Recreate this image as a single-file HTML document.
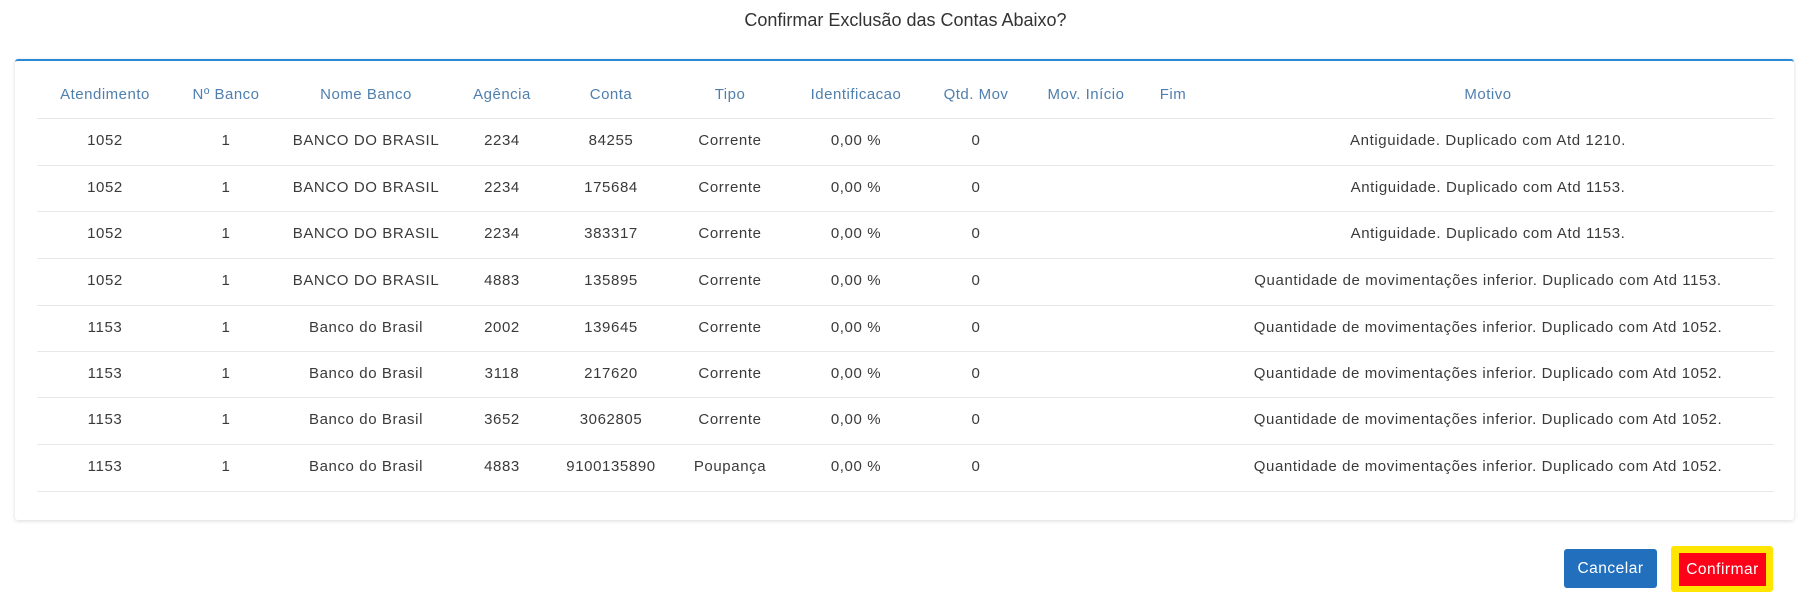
<!DOCTYPE html>
<html><head><meta charset="utf-8"><style>
body{margin:0;width:1811px;height:616px;background:#fff;font-family:"Liberation Sans",sans-serif;position:relative;overflow:hidden}
.t{position:absolute;top:9px;left:0;width:1811px;text-align:center;font-size:18px;color:#333;line-height:22px}
.card{position:absolute;left:15px;top:59px;width:1779px;height:461px;border-top:2px solid #2b8ad6;border-radius:3px;box-shadow:0 1px 4px rgba(0,0,0,.15);background:#fff;box-sizing:border-box}
.c{position:absolute;transform:translateX(-50%);white-space:nowrap;font-size:15px;letter-spacing:0.6px;line-height:18px;color:#3a3a3a}
.h{color:#4f7fae;letter-spacing:0.5px}
.l{position:absolute;left:37px;width:1737px;height:1px;background:#e8e8e8}
.btn{position:absolute;color:#fff;font-size:15.5px;letter-spacing:0.5px;text-align:center}
</style></head><body>
<div class="t">Confirmar Exclusão das Contas Abaixo?</div>
<div class="card"></div>
<div class="l" style="top:118px"></div>
<div class="l" style="top:165px"></div>
<div class="l" style="top:211px"></div>
<div class="l" style="top:258px"></div>
<div class="l" style="top:305px"></div>
<div class="l" style="top:351px"></div>
<div class="l" style="top:397px"></div>
<div class="l" style="top:444px"></div>
<div class="l" style="top:491px"></div>

<div class="c h" style="left:105px;top:86px">Atendimento</div>
<div class="c h" style="left:226px;top:86px">Nº Banco</div>
<div class="c h" style="left:366px;top:86px">Nome Banco</div>
<div class="c h" style="left:502px;top:86px">Agência</div>
<div class="c h" style="left:611px;top:86px">Conta</div>
<div class="c h" style="left:730px;top:86px">Tipo</div>
<div class="c h" style="left:856px;top:86px">Identificacao</div>
<div class="c h" style="left:976px;top:86px">Qtd. Mov</div>
<div class="c h" style="left:1086px;top:86px">Mov. Início</div>
<div class="c h" style="left:1173px;top:86px">Fim</div>
<div class="c h" style="left:1488px;top:86px">Motivo</div>

<div class="c" style="left:105px;top:132px">1052</div><div class="c" style="left:226px;top:132px">1</div><div class="c" style="left:366px;top:132px">BANCO DO BRASIL</div><div class="c" style="left:502px;top:132px">2234</div><div class="c" style="left:611px;top:132px">84255</div><div class="c" style="left:730px;top:132px">Corrente</div><div class="c" style="left:856px;top:132px">0,00 %</div><div class="c" style="left:976px;top:132px">0</div><div class="c" style="left:1488px;top:132px">Antiguidade. Duplicado com Atd 1210.</div>

<div class="c" style="left:105px;top:179px">1052</div><div class="c" style="left:226px;top:179px">1</div><div class="c" style="left:366px;top:179px">BANCO DO BRASIL</div><div class="c" style="left:502px;top:179px">2234</div><div class="c" style="left:611px;top:179px">175684</div><div class="c" style="left:730px;top:179px">Corrente</div><div class="c" style="left:856px;top:179px">0,00 %</div><div class="c" style="left:976px;top:179px">0</div><div class="c" style="left:1488px;top:179px">Antiguidade. Duplicado com Atd 1153.</div>

<div class="c" style="left:105px;top:225px">1052</div><div class="c" style="left:226px;top:225px">1</div><div class="c" style="left:366px;top:225px">BANCO DO BRASIL</div><div class="c" style="left:502px;top:225px">2234</div><div class="c" style="left:611px;top:225px">383317</div><div class="c" style="left:730px;top:225px">Corrente</div><div class="c" style="left:856px;top:225px">0,00 %</div><div class="c" style="left:976px;top:225px">0</div><div class="c" style="left:1488px;top:225px">Antiguidade. Duplicado com Atd 1153.</div>

<div class="c" style="left:105px;top:272px">1052</div><div class="c" style="left:226px;top:272px">1</div><div class="c" style="left:366px;top:272px">BANCO DO BRASIL</div><div class="c" style="left:502px;top:272px">4883</div><div class="c" style="left:611px;top:272px">135895</div><div class="c" style="left:730px;top:272px">Corrente</div><div class="c" style="left:856px;top:272px">0,00 %</div><div class="c" style="left:976px;top:272px">0</div><div class="c" style="left:1488px;top:272px">Quantidade de movimentações inferior. Duplicado com Atd 1153.</div>

<div class="c" style="left:105px;top:319px">1153</div><div class="c" style="left:226px;top:319px">1</div><div class="c" style="left:366px;top:319px">Banco do Brasil</div><div class="c" style="left:502px;top:319px">2002</div><div class="c" style="left:611px;top:319px">139645</div><div class="c" style="left:730px;top:319px">Corrente</div><div class="c" style="left:856px;top:319px">0,00 %</div><div class="c" style="left:976px;top:319px">0</div><div class="c" style="left:1488px;top:319px">Quantidade de movimentações inferior. Duplicado com Atd 1052.</div>

<div class="c" style="left:105px;top:365px">1153</div><div class="c" style="left:226px;top:365px">1</div><div class="c" style="left:366px;top:365px">Banco do Brasil</div><div class="c" style="left:502px;top:365px">3118</div><div class="c" style="left:611px;top:365px">217620</div><div class="c" style="left:730px;top:365px">Corrente</div><div class="c" style="left:856px;top:365px">0,00 %</div><div class="c" style="left:976px;top:365px">0</div><div class="c" style="left:1488px;top:365px">Quantidade de movimentações inferior. Duplicado com Atd 1052.</div>

<div class="c" style="left:105px;top:411px">1153</div><div class="c" style="left:226px;top:411px">1</div><div class="c" style="left:366px;top:411px">Banco do Brasil</div><div class="c" style="left:502px;top:411px">3652</div><div class="c" style="left:611px;top:411px">3062805</div><div class="c" style="left:730px;top:411px">Corrente</div><div class="c" style="left:856px;top:411px">0,00 %</div><div class="c" style="left:976px;top:411px">0</div><div class="c" style="left:1488px;top:411px">Quantidade de movimentações inferior. Duplicado com Atd 1052.</div>

<div class="c" style="left:105px;top:458px">1153</div><div class="c" style="left:226px;top:458px">1</div><div class="c" style="left:366px;top:458px">Banco do Brasil</div><div class="c" style="left:502px;top:458px">4883</div><div class="c" style="left:611px;top:458px">9100135890</div><div class="c" style="left:730px;top:458px">Poupança</div><div class="c" style="left:856px;top:458px">0,00 %</div><div class="c" style="left:976px;top:458px">0</div><div class="c" style="left:1488px;top:458px">Quantidade de movimentações inferior. Duplicado com Atd 1052.</div>

<div class="btn" style="left:1564px;top:549px;width:93px;height:39px;line-height:39px;background:#2270bd;border-radius:3px">Cancelar</div>
<div style="position:absolute;left:1671px;top:546px;width:102px;height:46px;background:#ffe500;border-radius:3px"></div>
<div class="btn" style="left:1679px;top:553px;width:87px;height:33px;line-height:33px;background:#ff0019">Confirmar</div>
</body></html>
